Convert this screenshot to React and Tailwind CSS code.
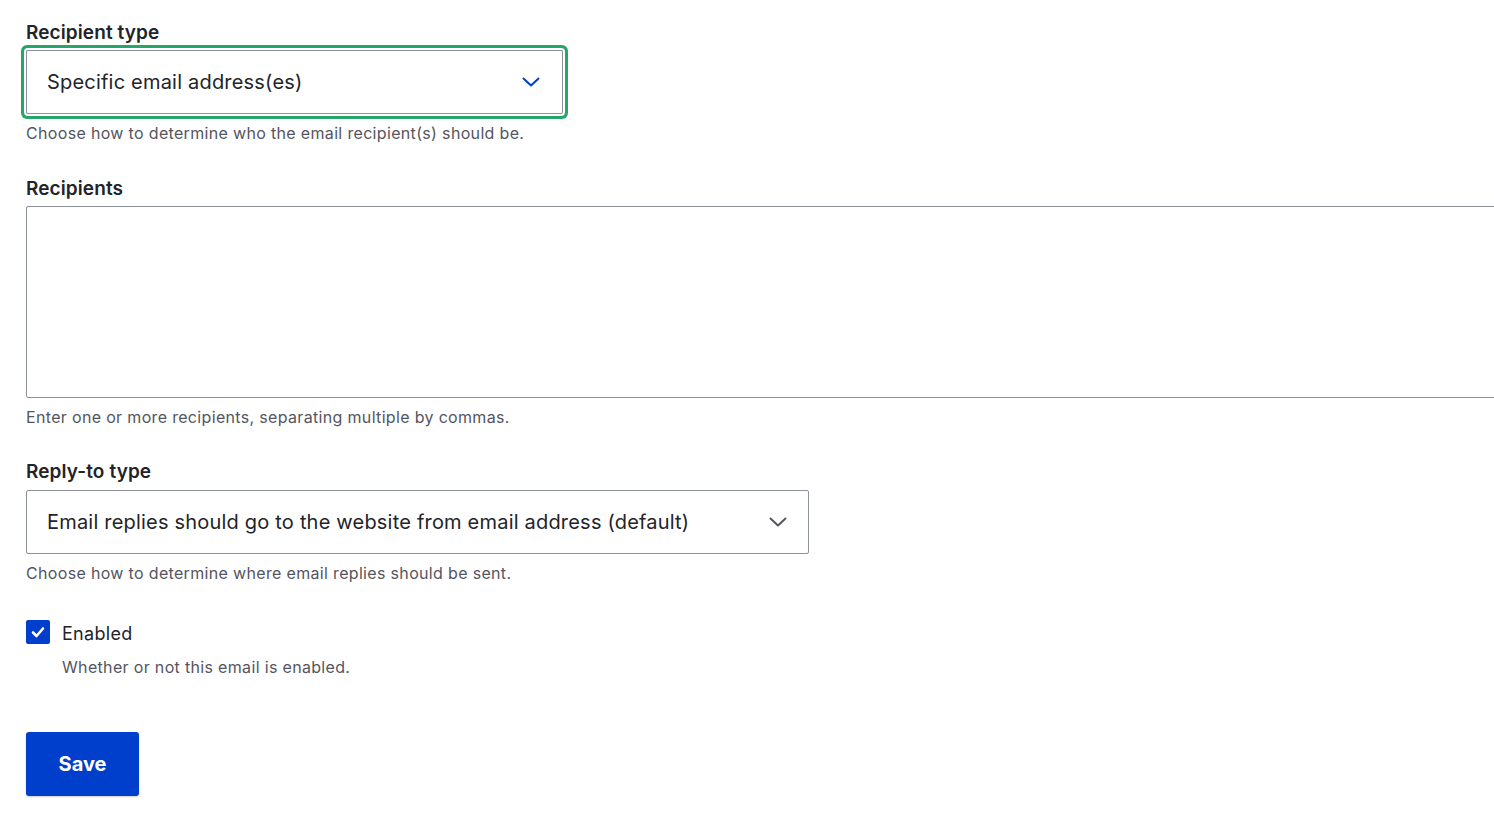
import React from 'react';

const font = { fontFamily: 'Inter, "Noto Sans", sans-serif' };

function Chevron({ className }) {
  return (
    <svg viewBox="0 0 18 10" className={className} fill="none" stroke="currentColor" strokeWidth="2" strokeLinecap="round" strokeLinejoin="round">
      <polyline points="1.5,1.5 9,8.5 16.5,1.5" />
    </svg>
  );
}

function Help({ children, className = '' }) {
  return <div className={`text-[16px] leading-[20px] tracking-[0.33px] text-[#545560] ${className}`}>{children}</div>;
}

function Label({ children, className = '' }) {
  return <div className={`text-[19px] leading-[20px] font-semibold tracking-[0.1px] text-[#232429] ${className}`}>{children}</div>;
}

export default function App() {
  return (
    <div className="min-h-screen bg-white overflow-x-hidden" style={font}>
      <div className="pl-[26px] pt-[23px] pb-10">
        {/* recipient type */}
        <Label className="mb-[7px]">Recipient type</Label>
        <div className="w-[537px] h-[64px] border border-[#8e929c] rounded-[2px] shadow-[0_0_0_2px_#fff,0_0_0_5px_#26a769] flex items-center justify-between pl-[20px] pr-[22px]">
          <span className="text-[20px] tracking-[0.2px] text-[#232429]">Specific email address(es)</span>
          <Chevron className="w-[18px] h-[10px] text-[#003ecc]" />
        </div>
        <Help className="mt-[9px]">Choose how to determine who the email recipient(s) should be.</Help>

        {/* recipients */}
        <Label className="mt-[36px] mb-[7px]">Recipients</Label>
        <div className="w-[1520px] h-[192px] border border-[#8e929c] rounded-[2px] bg-white" />
        <Help className="mt-[9px]">Enter one or more recipients, separating multiple by commas.</Help>

        {/* reply-to */}
        <Label className="mt-[35px] mb-[8px]">Reply-to type</Label>
        <div className="w-[783px] h-[64px] border border-[#8e929c] rounded-[2px] flex items-center justify-between pl-[20px] pr-[21px]">
          <span className="text-[20px] tracking-[0.2px] text-[#232429]">Email replies should go to the website from email address (default)</span>
          <Chevron className="w-[18px] h-[10px] text-[#545560]" />
        </div>
        <Help className="mt-[9px]">Choose how to determine where email replies should be sent.</Help>

        {/* enabled */}
        <div className="mt-[37px] h-[24px] flex items-start gap-[12px]">
          <div className="w-[24px] h-[24px] rounded-[2px] bg-[#003ecc] flex items-center justify-center">
            <svg viewBox="0 0 16 16" className="w-[16px] h-[16px]" fill="none" stroke="#fff" strokeWidth="2.6" strokeLinecap="round" strokeLinejoin="round">
              <polyline points="3,8.5 6.5,12 13,4.5" />
            </svg>
          </div>
          <span className="pt-[3px] text-[18px] leading-[21px] tracking-[0.3px] text-[#232429]">Enabled</span>
        </div>
        <Help className="mt-[13px] pl-[36px]">Whether or not this email is enabled.</Help>

        <button className="mt-[55px] h-[64px] w-[113px] bg-[#003ecc] text-white text-[20px] font-bold rounded-[3px] shadow-[0_1px_2px_rgba(0,0,0,0.2)]">
          Save
        </button>
      </div>
    </div>
  );
}
